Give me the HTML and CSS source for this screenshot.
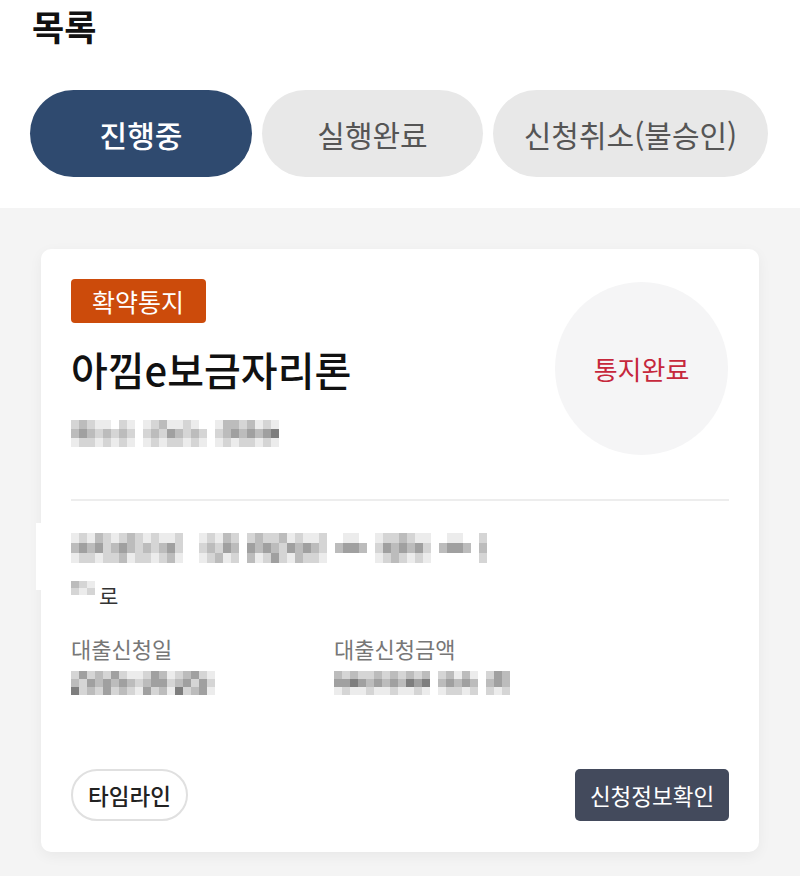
FILE: index.html
```html
<!DOCTYPE html>
<html lang="ko">
<head>
<meta charset="utf-8">
<title>목록</title>
<link rel="stylesheet" href="styles.css">
</head>
<body>
<header class="header">
  <h1 class="title">목록</h1>
  <nav class="tabs">
    <div class="tab tab-active tab-w1">진행중</div>
    <div class="tab tab-w2">실행완료</div>
    <div class="tab tab-w3">신청취소(불승인)</div>
  </nav>
</header>
<main class="content">
  <section class="card">
    <div class="card-top">
      <div class="card-info">
        <span class="badge">확약통지</span>
        <h2 class="product">아낌e보금자리론</h2>
        <div class="mosaic m26 r9">
          <i class="b"></i><i class="c"></i><i class="b"></i><i class="a"></i><i class="a"></i><i class="o"></i><i class="b"></i><i class="a"></i><i class="o"></i><i class="a"></i><i class="b"></i><i class="c"></i><i class="a"></i><i class="a"></i><i class="b"></i><i class="a"></i><i class="o"></i><i class="o"></i><i class="a"></i><i class="c"></i><i class="c"></i><i class="b"></i><i class="c"></i><i class="a"></i><i class="b"></i><i class="a"></i>
          <i class="c"></i><i class="d"></i><i class="c"></i><i class="b"></i><i class="c"></i><i class="b"></i><i class="c"></i><i class="b"></i><i class="o"></i><i class="b"></i><i class="c"></i><i class="b"></i><i class="d"></i><i class="c"></i><i class="b"></i><i class="c"></i><i class="b"></i><i class="o"></i><i class="b"></i><i class="c"></i><i class="d"></i><i class="c"></i><i class="d"></i><i class="c"></i><i class="d"></i><i class="e"></i>
          <i class="a"></i><i class="b"></i><i class="b"></i><i class="a"></i><i class="b"></i><i class="a"></i><i class="b"></i><i class="a"></i><i class="o"></i><i class="a"></i><i class="b"></i><i class="a"></i><i class="b"></i><i class="b"></i><i class="a"></i><i class="b"></i><i class="a"></i><i class="o"></i><i class="a"></i><i class="b"></i><i class="a"></i><i class="b"></i><i class="b"></i><i class="a"></i><i class="b"></i><i class="a"></i>
        </div>
      </div>
      <div class="status-circle">통지완료</div>
    </div>

    <hr class="divider">

    <div class="mosaic m52 r10 addr">
      <i class="a"></i><i class="b"></i><i class="a"></i><i class="c"></i><i class="b"></i><i class="a"></i><i class="b"></i><i class="c"></i><i class="b"></i><i class="a"></i><i class="b"></i><i class="a"></i><i class="a"></i><i class="b"></i><i class="o"></i><i class="o"></i><i class="a"></i><i class="b"></i><i class="a"></i><i class="c"></i><i class="b"></i><i class="o"></i><i class="b"></i><i class="c"></i><i class="b"></i><i class="b"></i><i class="c"></i><i class="a"></i><i class="b"></i><i class="a"></i><i class="a"></i><i class="b"></i><i class="o"></i><i class="o"></i><i class="a"></i><i class="a"></i><i class="o"></i><i class="o"></i><i class="a"></i><i class="b"></i><i class="b"></i><i class="c"></i><i class="b"></i><i class="a"></i><i class="a"></i><i class="o"></i><i class="o"></i><i class="a"></i><i class="a"></i><i class="o"></i><i class="o"></i><i class="b"></i>
      <i class="c"></i><i class="d"></i><i class="c"></i><i class="d"></i><i class="b"></i><i class="c"></i><i class="d"></i><i class="c"></i><i class="b"></i><i class="c"></i><i class="b"></i><i class="c"></i><i class="d"></i><i class="b"></i><i class="o"></i><i class="o"></i><i class="b"></i><i class="c"></i><i class="b"></i><i class="d"></i><i class="c"></i><i class="o"></i><i class="d"></i><i class="c"></i><i class="d"></i><i class="c"></i><i class="b"></i><i class="d"></i><i class="c"></i><i class="d"></i><i class="c"></i><i class="b"></i><i class="o"></i><i class="c"></i><i class="d"></i><i class="d"></i><i class="c"></i><i class="o"></i><i class="b"></i><i class="d"></i><i class="c"></i><i class="d"></i><i class="c"></i><i class="d"></i><i class="b"></i><i class="o"></i><i class="c"></i><i class="d"></i><i class="d"></i><i class="c"></i><i class="o"></i><i class="c"></i>
      <i class="a"></i><i class="b"></i><i class="b"></i><i class="a"></i><i class="b"></i><i class="b"></i><i class="c"></i><i class="a"></i><i class="b"></i><i class="b"></i><i class="a"></i><i class="b"></i><i class="c"></i><i class="a"></i><i class="o"></i><i class="o"></i><i class="a"></i><i class="b"></i><i class="c"></i><i class="a"></i><i class="b"></i><i class="o"></i><i class="c"></i><i class="a"></i><i class="b"></i><i class="d"></i><i class="b"></i><i class="a"></i><i class="c"></i><i class="b"></i><i class="b"></i><i class="a"></i><i class="o"></i><i class="o"></i><i class="o"></i><i class="o"></i><i class="o"></i><i class="o"></i><i class="a"></i><i class="b"></i><i class="c"></i><i class="b"></i><i class="a"></i><i class="b"></i><i class="a"></i><i class="o"></i><i class="o"></i><i class="o"></i><i class="o"></i><i class="o"></i><i class="o"></i><i class="b"></i>
    </div>
    <div class="addr-tail">
      <div class="mosaic m3 r7">
        <i class="c"></i><i class="b"></i><i class="a"></i>
        <i class="b"></i><i class="a"></i><i class="b"></i>
      </div>
      <span class="tail-text">로</span>
    </div>

    <div class="facts">
      <div class="fact fact-date">
        <div class="fact-label">대출신청일</div>
        <div class="mosaic m18 r8">
          <i class="b"></i><i class="d"></i><i class="b"></i><i class="c"></i><i class="b"></i><i class="d"></i><i class="b"></i><i class="a"></i><i class="a"></i><i class="b"></i><i class="d"></i><i class="c"></i><i class="a"></i><i class="b"></i><i class="c"></i><i class="d"></i><i class="b"></i><i class="a"></i>
          <i class="c"></i><i class="b"></i><i class="d"></i><i class="c"></i><i class="d"></i><i class="c"></i><i class="d"></i><i class="c"></i><i class="b"></i><i class="c"></i><i class="d"></i><i class="d"></i><i class="b"></i><i class="c"></i><i class="d"></i><i class="b"></i><i class="d"></i><i class="b"></i>
          <i class="e"></i><i class="b"></i><i class="c"></i><i class="b"></i><i class="d"></i><i class="b"></i><i class="c"></i><i class="b"></i><i class="a"></i><i class="d"></i><i class="b"></i><i class="c"></i><i class="a"></i><i class="e"></i><i class="b"></i><i class="c"></i><i class="d"></i><i class="a"></i>
        </div>
      </div>
      <div class="fact">
        <div class="fact-label">대출신청금액</div>
        <div class="mosaic m22 r8">
          <i class="c"></i><i class="b"></i><i class="c"></i><i class="b"></i><i class="b"></i><i class="c"></i><i class="b"></i><i class="c"></i><i class="b"></i><i class="c"></i><i class="b"></i><i class="c"></i><i class="o"></i><i class="b"></i><i class="c"></i><i class="a"></i><i class="c"></i><i class="a"></i><i class="o"></i><i class="b"></i><i class="d"></i><i class="c"></i>
          <i class="d"></i><i class="d"></i><i class="e"></i><i class="d"></i><i class="c"></i><i class="d"></i><i class="c"></i><i class="d"></i><i class="c"></i><i class="e"></i><i class="d"></i><i class="e"></i><i class="o"></i><i class="c"></i><i class="d"></i><i class="c"></i><i class="d"></i><i class="c"></i><i class="o"></i><i class="c"></i><i class="d"></i><i class="c"></i>
          <i class="a"></i><i class="b"></i><i class="a"></i><i class="a"></i><i class="b"></i><i class="a"></i><i class="a"></i><i class="b"></i><i class="a"></i><i class="a"></i><i class="b"></i><i class="a"></i><i class="o"></i><i class="a"></i><i class="b"></i><i class="b"></i><i class="a"></i><i class="b"></i><i class="o"></i><i class="b"></i><i class="a"></i><i class="b"></i>
        </div>
      </div>
    </div>

    <div class="actions">
      <button class="btn btn-outline" type="button">타임라인</button>
      <button class="btn btn-dark" type="button">신청정보확인</button>
    </div>
  </section>
</main>
</body>
</html>
```

FILE: styles.css
```css
* { box-sizing: border-box; }

html, body {
  margin: 0;
  padding: 0;
  background: #f4f4f4;
}

body {
  font-family: "Noto Sans CJK KR", "Noto Sans", sans-serif;
  color: #111;
  width: 800px;
  min-height: 876px;
}

.header {
  background: #fff;
  height: 208px;
  padding: 0 30px;
  overflow: hidden;
}

.title {
  margin: 0;
  padding: 0 0 0 2px;
  font-size: 35px;
  line-height: 51px;
  font-weight: 700;
  color: #111;
}

.tabs {
  display: flex;
  gap: 10px;
  margin-top: 39px;
}

.tab {
  height: 87px;
  border-radius: 44px;
  background: #e8e8e8;
  color: #555;
  font-size: 30px;
  font-weight: 400;
  display: flex;
  align-items: center;
  justify-content: center;
}

.tab-active {
  background: #2f4a6f;
  color: #fff;
  font-weight: 500;
}

.tab-w1 { width: 222px; }
.tab-w2 { width: 221px; }
.tab-w3 { width: 275px; }

.content {
  background: #f4f4f4;
  padding: 41px 41px 23px;
}

.card {
  position: relative;
  background: #fff;
  border-radius: 10px;
  box-shadow: 0 4px 14px rgba(0, 0, 0, 0.05);
  padding: 30px 30px 31px;
}

.card::before {
  content: "";
  position: absolute;
  left: -5px;
  top: 274px;
  width: 5px;
  height: 67px;
  background: #fff;
}

.card-top {
  display: flex;
  justify-content: space-between;
  height: 176px;
}

.card-info {
  display: flex;
  flex-direction: column;
  align-items: flex-start;
}

.badge {
  display: inline-block;
  height: 44px;
  line-height: 44px;
  padding: 0 22px 0 21px;
  background: #cc4b0b;
  color: #fff;
  font-size: 25px;
  border-radius: 4px;
}

.product {
  margin: 22px 0 0;
  font-size: 40px;
  line-height: 48px;
  font-weight: 500;
  color: #111;
}

.card-info .mosaic {
  margin-top: 27px;
}

.status-circle {
  width: 173px;
  height: 173px;
  margin-top: 3px;
  margin-right: 1px;
  border-radius: 50%;
  background: #f5f5f6;
  color: #c6283c;
  font-size: 26px;
  display: flex;
  align-items: center;
  justify-content: center;
}

.divider {
  margin: 44px 0 0;
  border: 0;
  height: 2px;
  background: #ededed;
}

.mosaic {
  display: grid;
  grid-auto-flow: row;
  filter: blur(0.4px);
}

.mosaic i { display: block; }
.mosaic .o { background: transparent; }
.mosaic .a { background: #ececec; }
.mosaic .b { background: #d5d5d5; }
.mosaic .c { background: #bcbcbc; }
.mosaic .d { background: #a0a0a0; }
.mosaic .e { background: #7e7e7e; }

.m3 { grid-template-columns: repeat(3, 8px); }
.m18 { grid-template-columns: repeat(18, 8px); }
.m22 { grid-template-columns: repeat(22, 8px); }
.m26 { grid-template-columns: repeat(26, 8px); }
.m52 { grid-template-columns: repeat(52, 8px); }

.r7 { grid-auto-rows: 7px; }
.r8 { grid-auto-rows: 8px; }
.r9 { grid-auto-rows: 9px; }
.r10 { grid-auto-rows: 10px; }

.addr {
  margin-top: 32px;
}

.addr-tail {
  display: flex;
  align-items: flex-start;
  gap: 4px;
  margin-top: 18px;
  height: 28px;
}

.tail-text {
  font-size: 21px;
  line-height: 28px;
  color: #333;
}

.facts {
  display: flex;
  margin-top: 24px;
}

.fact-date {
  width: 263px;
}

.fact-label {
  font-size: 22px;
  line-height: 30px;
  color: #777;
}

.fact .mosaic {
  margin-top: 8px;
}

.actions {
  display: flex;
  justify-content: space-between;
  align-items: center;
  margin-top: 74px;
}

.btn {
  height: 52px;
  font-family: inherit;
  font-size: 22.5px;
  padding: 0;
  cursor: pointer;
}

.btn-outline {
  width: 117px;
  background: #fff;
  border: 2px solid #e0e0e0;
  border-radius: 26px;
  color: #222;
  font-weight: 500;
}

.btn-dark {
  width: 154px;
  background: #434a5c;
  border: 0;
  border-radius: 5px;
  color: #fff;
  font-weight: 400;
}
```
